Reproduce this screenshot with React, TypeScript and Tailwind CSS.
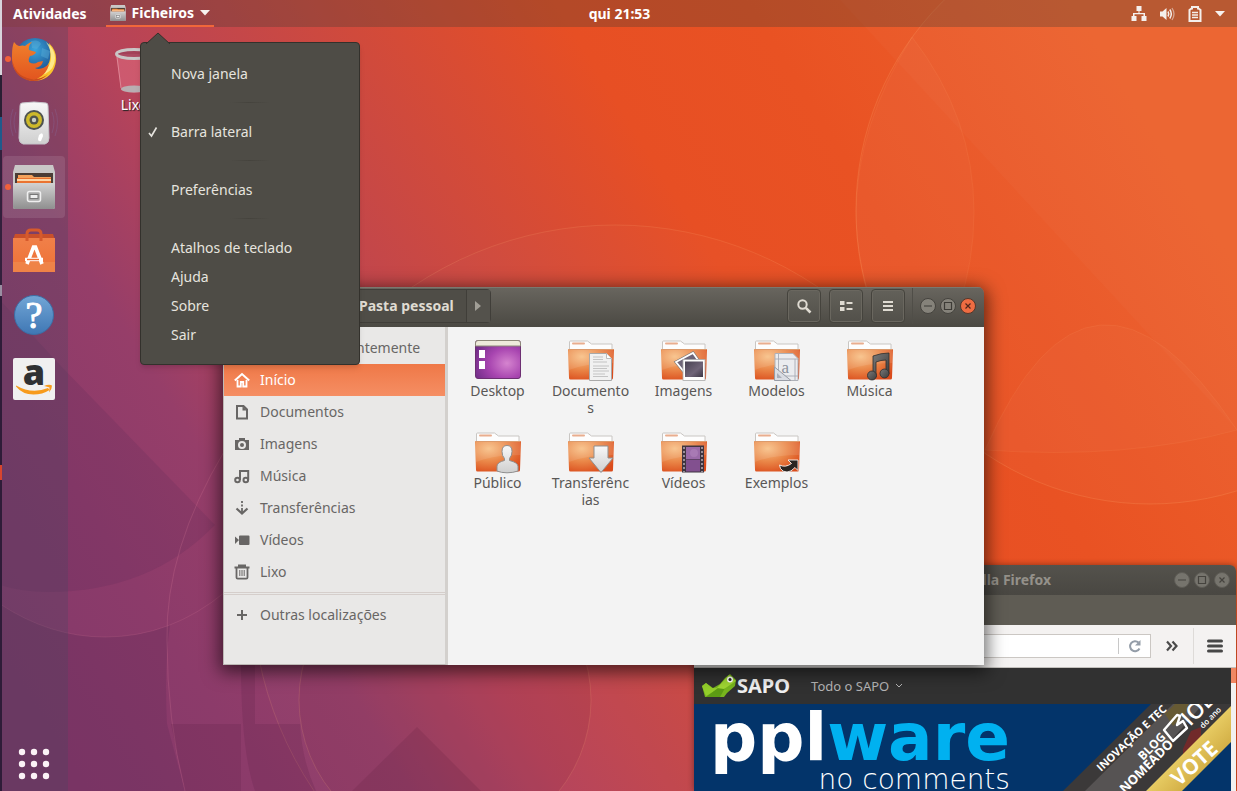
import type { ReactNode } from "react";
import { clsx } from "clsx";

const places = [
  { label: "Início", icon: <HomeIcon />, active: true },
  { label: "Documentos", icon: <PageIcon /> },
  { label: "Imagens", icon: <CameraIcon /> },
  { label: "Música", icon: <NotesIcon /> },
  { label: "Transferências", icon: <DownloadIcon /> },
  { label: "Vídeos", icon: <CamcorderIcon /> },
  { label: "Lixo", icon: <BinIcon /> },
];

const files = [
  { label: "Desktop", icon: <DesktopFolder /> },
  { label: "Documento\ns", icon: <Folder><DocumentEmblem /></Folder> },
  { label: "Imagens", icon: <Folder><PhotosEmblem /></Folder> },
  { label: "Modelos", icon: <Folder><TemplateEmblem /></Folder> },
  { label: "Música", icon: <Folder><MusicEmblem /></Folder> },
  { label: "Público", icon: <Folder><PersonEmblem /></Folder> },
  { label: "Transferênc\nias", icon: <Folder><ArrowEmblem /></Folder> },
  { label: "Vídeos", icon: <Folder><FilmEmblem /></Folder> },
  { label: "Exemplos", icon: <Folder><LinkEmblem /></Folder> },
];

const dockApps = [
  { label: "Firefox", icon: <FirefoxIcon />, running: true },
  { label: "Rhythmbox", icon: <SpeakerIcon /> },
  { label: "Ficheiros", icon: <CabinetIcon size={44} />, running: true, focused: true },
  { label: "Software", icon: <SoftwareIcon /> },
  { label: "Ajuda", icon: <HelpIcon /> },
  { label: "Amazon", icon: <AmazonIcon /> },
];

const menuGroups = [
  [{ label: "Nova janela" }],
  [{ label: "Barra lateral", checked: true }],
  [{ label: "Preferências" }],
  [{ label: "Atalhos de teclado" }, { label: "Ajuda" }, { label: "Sobre" }, { label: "Sair" }],
];

export default function App() {
  return (
    <div className="relative isolate flex min-h-screen overflow-hidden bg-[#d94a33] font-['Noto_Sans',sans-serif] text-sm">
      <SharedDefs />
      <Wallpaper />
      <div className="w-0.5 bg-[linear-gradient(#d8d4dc_0_75px,#2a1f33_75px_117px,#1f5a8c_117px_150px,#33203c_150px_285px,#9a8fa2_285px_296px,#2e1c38_296px_465px,#d8452e_465px_480px,#2e1c38_480px)]" />
      <div className="flex flex-1 flex-col">
        <TopBar />
        <div className="flex flex-1">
          <Dock />
          <main className="flex-1 px-[38px] pt-5">
            <button className="flex w-14 flex-col items-center text-white">
              <TrashCan />
              <span className="leading-5 [text-shadow:1px_1px_1px_#222]">Lixo</span>
            </button>
          </main>
        </div>
      </div>
      <FirefoxWindow />
      <FilesWindow />
      <AppMenu />
    </div>
  );
}

function TopBar() {
  return (
    <header className="grid h-[27px] grid-cols-[1fr_auto_1fr] items-center bg-[#3f3a33]/30 font-bold text-white">
      <div className="flex h-full items-stretch">
        <button className="px-[11px]">Atividades</button>
        <button className="ml-2 flex items-center gap-1.5 border-b-2 border-[#f1673a] px-1">
          <CabinetIcon size={16} />
          Ficheiros
          <Caret />
        </button>
      </div>
      <button>qui 21:53</button>
      <button className="mr-3 flex items-center gap-3 justify-self-end" aria-label="Sistema">
        <svg width="16" height="16" viewBox="0 0 16 16" fill="#f4efec">
          <path d="M5.500 0h5v5h-2v2h5.500v3h1.500v5h-5v-5h2V8.200H3.500V10h2v5h-5v-5H2V7h5.500V5h-2z" />
        </svg>
        <svg width="16" height="16" viewBox="0 0 16 16" fill="none" stroke="#f4efec">
          <path d="M1 5.500h2.500L7.500 2v12l-4-3.500H1z" fill="#f4efec" stroke="none" />
          <path d="M9 5.500q1.500 2.500 0 5M10.800 3.500q3 4.500 0 9" strokeWidth="1.500" />
          <path d="M13 2q4 6 0 12" strokeOpacity=".5" strokeWidth="1.300" />
        </svg>
        <svg width="16" height="16" viewBox="0 0 16 16" fill="none" stroke="#f4efec" strokeWidth="2">
          <path d="M4.500 2.500H5V1h6v1.500h.5L13.500 4v11h-11V4z" />
          <path d="M5 6.500h6M5 9h6M5 11.500h6" strokeWidth="1.300" />
        </svg>
        <Caret />
      </button>
    </header>
  );
}

function Dock() {
  return (
    <nav className="flex w-[66px] flex-col gap-0.5 bg-[#4a4660]/30 pt-px" aria-label="Dock">
      {dockApps.map((app) => (
        <button
          key={app.label}
          aria-label={app.label}
          className={clsx("relative mr-[3px] ml-px flex h-[62px] items-center justify-center rounded", app.focused && "bg-white/10")}
        >
          {app.running && <span className="absolute top-7 left-0.5 size-1.5 rounded-full bg-[#f0603a]" />}
          {app.icon}
        </button>
      ))}
      <button aria-label="Mostrar aplicações" className="mt-auto mr-[3px] ml-px flex h-[54px] items-center justify-center">
        <svg width="32" height="32" viewBox="0 0 32 32" fill="#fbf3f7">
          {[4, 16, 28].map((y) => [4, 16, 28].map((x) => <circle key={`${x}-${y}`} cx={x} cy={y} r="3.200" />))}
        </svg>
      </button>
    </nav>
  );
}

function AppMenu() {
  return (
    <div role="menu" className="absolute top-[42px] left-[140px] w-[220px] rounded border border-[#33312c] bg-[#4e4c46] pt-4 pb-[15px] text-[#e6e4df] shadow-md">
      <svg className="absolute -top-[11px] left-1" width="26" height="12" viewBox="0 0 26 12">
        <path d="M1 12 13 1l12 11" fill="#4e4c46" stroke="#33312c" />
      </svg>
      {menuGroups.map((group, i) => (
        <div key={i}>
          {i > 0 && (
            <div className="flex h-[29px] items-center justify-center">
              <div className="h-px w-10 bg-linear-to-r from-transparent via-[#45433d] to-transparent" />
            </div>
          )}
          {group.map((item) => (
            <MenuItem key={item.label} {...item} />
          ))}
        </div>
      ))}
    </div>
  );
}

function MenuItem({ label, checked }: { label: string; checked?: boolean }) {
  return (
    <button
      role={checked ? "menuitemcheckbox" : "menuitem"}
      aria-checked={checked}
      className="flex h-[29px] w-full items-center pl-1.5 text-left"
    >
      <span className="w-6">
        {checked && (
          <svg width="12" height="12" viewBox="0 0 12 12" fill="none" stroke="currentColor">
            <path d="m2 7 2.500 3L9.500 1.500" strokeWidth="1.600" />
          </svg>
        )}
      </span>
      {label}
    </button>
  );
}

function FilesWindow() {
  return (
    <section
      aria-label="Pasta pessoal"
      className="absolute top-[287px] left-[223px] flex h-[378px] w-[761px] flex-col overflow-hidden rounded-t-md shadow-[0_4px_18px_3px_rgba(0,0,0,0.6)]"
    >
      <div className="flex h-10 items-center bg-linear-to-b from-[#69665f] to-[#4b4943] px-2 pb-0.5 text-[#dfdbd2] shadow-[inset_0_1px_0_#7b786f]">
        <div className="flex h-[34px] rounded border border-[#45433d] bg-[#5b5952] font-bold">
          <button className="w-8" aria-label="Recuar">‹</button>
          <button className="w-8 border-l border-[#45433d]" aria-label="Avançar">›</button>
        </div>
        <div className="ml-[11px] flex h-[34px] rounded border border-[#403e39] bg-[#4f4d47]">
          <button className="flex items-center gap-1.5 pr-3 pl-7 font-bold">
            <HomeIcon />
            Pasta pessoal
          </button>
          <button className="flex w-6 items-center justify-center border-l border-[#403e39] bg-[#54524c]" aria-label="Seguinte">
            <svg width="6" height="10" viewBox="0 0 6 10" fill="#a19e96">
              <path d="M0 0l6 5-6 5z" />
            </svg>
          </button>
        </div>
        <div className="ml-auto flex gap-2">
          <HeaderButton label="Pesquisar">
            <circle cx="6.500" cy="6.500" r="4.200" strokeWidth="2" />
            <path d="m9.800 9.800 4.700 4.700" strokeWidth="2.600" />
          </HeaderButton>
          <HeaderButton label="Vista de lista">
            <path d="M2 3h4.500v4H2zM2 9h4.500v4H2zM8.500 4h6v2h-6zM8.500 10h6v2h-6z" fill="currentColor" stroke="none" />
          </HeaderButton>
          <HeaderButton label="Menu">
            <path d="M3 4h10M3 8h10M3 12h10" strokeWidth="2" />
          </HeaderButton>
        </div>
        <div className="ml-[7px] h-9 w-px bg-[#504e48]" />
        <WindowControls active />
      </div>
      <div className="flex flex-1">
        <aside className="w-[225px] border-r-3 border-b border-l border-r-[#d3d0cd] border-b-[#bdb9b6] border-l-[#bdb9b6] bg-[#e9e8e7] pt-[5px] text-[#686665]">
          <Place label="Utilizados recentemente" icon={<PageIcon />} />
          {places.map((place) => (
            <Place key={place.label} {...place} />
          ))}
          <div className="my-1 h-[3px] border-y border-[#d5cecb]" />
          <Place
            label="Outras localizações"
            icon={
              <SymbolicIcon>
                <path d="M8 3v10M3 8h10" strokeWidth="2" />
              </SymbolicIcon>
            }
          />
        </aside>
        <div className="flex flex-1 flex-wrap content-start bg-[#f3f3f3] px-[3px] pt-3">
          {files.map((file) => (
            <button key={file.label} className="flex h-[92px] w-[93px] flex-col items-center text-[#595756]">
              {file.icon}
              <span className="leading-[17px] whitespace-pre-line">{file.label}</span>
            </button>
          ))}
        </div>
      </div>
    </section>
  );
}

function Place({ label, icon, active }: { label: string; icon: ReactNode; active?: boolean }) {
  return (
    <button
      className={clsx(
        "flex h-8 w-full items-center gap-2.5 pl-2.5 text-left",
        active && "bg-linear-to-b from-[#ef7847] to-[#f58e63] text-white"
      )}
    >
      {icon}
      {label}
    </button>
  );
}

function HeaderButton({ label, children }: { label: string; children: ReactNode }) {
  return (
    <button
      aria-label={label}
      className="flex size-[34px] items-center justify-center rounded border border-[#45433d] bg-linear-to-b from-[#63615a] to-[#52504a] shadow-[inset_0_0_0_1px_#6a675f]"
    >
      <SymbolicIcon>{children}</SymbolicIcon>
    </button>
  );
}

function WindowControls({ active }: { active?: boolean }) {
  const round = "size-4 rounded-full border";
  const muted = active ? "border-[#45433e] bg-[#85827a] text-[#3d3b36]" : "border-[#5e5c56] bg-[#76746d] text-[#45433e]";
  return (
    <div className="ml-[7px] flex gap-1">
      <button aria-label="Minimizar" className={clsx(round, muted)}>
        <ControlGlyph d="M3 7h8" />
      </button>
      <button aria-label="Maximizar" className={clsx(round, muted)}>
        <ControlGlyph d="M3.500 3.500h7v7h-7z" />
      </button>
      <button aria-label="Fechar" className={clsx(round, active ? "border-[#55372b] bg-[#ef6c42] text-[#54261a]" : muted)}>
        <ControlGlyph d="m4.500 4.500 5 5m0-5-5 5" />
      </button>
    </div>
  );
}

function ControlGlyph({ d }: { d: string }) {
  return (
    <svg width="14" height="14" viewBox="0 0 14 14" fill="none" stroke="currentColor" strokeWidth="1.200">
      <path d={d} />
    </svg>
  );
}

function FirefoxWindow() {
  return (
    <section
      aria-label="Mozilla Firefox"
      className="absolute top-[565px] right-px bottom-0 flex w-[542px] flex-col overflow-hidden rounded-t-md shadow-[0_0_6px_rgba(0,0,0,0.4)]"
    >
      <div className="grid h-[30px] shrink-0 grid-cols-[1fr_auto_1fr] items-center bg-linear-to-b from-[#54524c] to-[#494742] px-1.5">
        <h2 className="col-start-2 font-bold text-[#94918a]">Pplware – Mozilla Firefox</h2>
        <div className="justify-self-end">
          <WindowControls />
        </div>
      </div>
      <div className="h-[30px] shrink-0 bg-[#5f5c54]" />
      <div className="flex h-[43px] shrink-0 items-center border-b border-[#c3c0bc] bg-[#f4f2f1] pl-4 text-[#4b4b4b]">
        <div className="flex h-6 flex-1 items-center border border-[#cbc7c3] bg-white">
          <input aria-label="Endereço" className="h-full min-w-0 flex-1 px-2 outline-none" />
          <button aria-label="Recarregar" className="flex h-4 w-8 items-center justify-center border-l border-[#c8c8c8]">
            <svg width="14" height="14" viewBox="0 0 14 14" fill="none" stroke="#949da8" strokeWidth="2">
              <path d="M11.500 9.500A5 5 0 1 1 10.500 3.500" />
              <path d="M12.500 1v5.500H7z" fill="#949da8" stroke="none" />
            </svg>
          </button>
        </div>
        <button aria-label="Mais ferramentas" className="flex w-[42px] justify-center">
          <svg width="14" height="12" viewBox="0 0 14 12" fill="none" stroke="#4b4b4b" strokeWidth="2.200">
            <path d="m2 1.500 4 4.500-4 4.500M7.500 1.500l4 4.500-4 4.500" />
          </svg>
        </button>
        <button aria-label="Abrir menu" className="flex h-9 w-[43px] items-center justify-center border-l border-[#dedbd8]">
          <svg width="16" height="14" viewBox="0 0 16 14" stroke="#474747" strokeWidth="3" strokeLinecap="round">
            <path d="M1.500 2h13M1.500 7h13M1.500 12h13" />
          </svg>
        </button>
      </div>
      <div className="flex flex-1">
        <div className="flex flex-1 flex-col">
          <div className="flex h-9 items-center bg-[#313131] pl-2">
            <SapoFrog />
            <span className="text-xl font-bold text-[#f1f1f1]">SAPO</span>
            <a href="#sapo" className="ml-[21px] flex items-center gap-1.5 text-[13px] text-[#b5b5b5]">
              Todo o SAPO
              <svg width="8" height="6" viewBox="0 0 8 6" fill="none" stroke="#b5b5b5">
                <path d="m1 1 3 3 3-3" />
              </svg>
            </a>
          </div>
          <div className="flex flex-1 justify-between overflow-hidden bg-[#03346a] pl-4">
            <div className="flex flex-col items-end text-white">
              <p className="font-['DejaVu_Sans',sans-serif] text-[66px] leading-[68px] font-bold">
                ppl<span className="text-[#00b1f0]">ware</span>
              </p>
              <p className="font-['DejaVu_Sans',sans-serif] text-[28px] leading-4 font-extralight">no comments</p>
            </div>
            <VoteRibbon />
          </div>
        </div>
        <div className="w-[5px] bg-[#f2f1f0]">
          <div className="h-[15px] bg-[#f08763]" />
        </div>
      </div>
    </section>
  );
}

function VoteRibbon() {
  return (
    <svg className="shrink-0" width="168" height="87" viewBox="0 0 168 87" fontFamily="'Open Sans', sans-serif" fontWeight="700" fill="#fff">
      <path d="M0 87 88 0h80v4L83 87z" fill="#3b3939" />
      <path d="M22 87 110 0h30L64 87z" fill="#565353" />
      <path d="m102 10 10-10h14l-4 10-12 12z" fill="#675a33" />
      <path d="m120 45 8-18 10-4v12l-18 22z" fill="#712a2a" />
      <path d="m83 87 85-85v36l-49 49z" fill="url(#gold)" />
      <text transform="translate(38 68) rotate(-43)" fontSize="11">INOVAÇÃO E TEC</text>
      <text transform="translate(80 57) rotate(-45)" fontSize="12">BLOG</text>
      <text transform="translate(62 90) rotate(-45)" fontSize="13">NOMEADO</text>
      <text transform="translate(116 83) rotate(-42)" fontSize="21">VOTE</text>
      <path d="m101 26 9 11 14-13-4-7-6 4 3-9-3-1z" fill="none" stroke="#fff" strokeWidth="2.400" strokeLinejoin="round" />
      <text transform="translate(127 23) rotate(-45)" fontSize="22" fontWeight="600">IOL</text>
      <text transform="translate(140 25) rotate(-45)" fontSize="8" fontWeight="600">do ano</text>
    </svg>
  );
}

function SapoFrog() {
  return (
    <svg width="35" height="26" viewBox="0 0 35 26">
      <path d="m0 13 4-3 7 5 7-4 5-6 5-4 6 6-1 6-8 7-3 4H3z" fill="#78b51e" />
      <path d="m0 13 4-3 6 5h8L4 23z" fill="#94cf2b" />
      <path d="m4 24 12-9h7l-5 9z" fill="#5d9c14" />
      <path d="M15 15 27 2l7 6-12 8z" fill="#a0d733" />
      <circle cx="28" cy="6.500" r="3" fill="#fff" />
      <circle cx="28" cy="6.500" r="1.500" fill="#222" />
    </svg>
  );
}

function Caret() {
  return (
    <svg width="10" height="6" viewBox="0 0 10 6" fill="#f7f2ef">
      <path d="M0 0h10L5 5.500z" />
    </svg>
  );
}

function SymbolicIcon({ children }: { children: ReactNode }) {
  return (
    <svg width="16" height="16" viewBox="0 0 16 16" fill="none" stroke="currentColor" className="shrink-0">
      {children}
    </svg>
  );
}

function HomeIcon() {
  return (
    <SymbolicIcon>
      <path d="M.8 8.500 8 2l7.200 6.500" strokeWidth="2" />
      <path d="M3.500 8v6.500h3.300V10h2.400v4.500h3.300V8" strokeWidth="1.800" />
    </SymbolicIcon>
  );
}

function PageIcon() {
  return (
    <SymbolicIcon>
      <path d="M3 2h6.500L13 5.500V14.500H3z" strokeWidth="2" />
      <path d="M8.500 2v4.500H13z" fill="currentColor" stroke="none" />
    </SymbolicIcon>
  );
}

function CameraIcon() {
  return (
    <SymbolicIcon>
      <path fillRule="evenodd" d="M1 4h4V2h6v2h4v10H1zM8 5a4 4 0 1 0 0 8 4 4 0 0 0 0-8z" fill="currentColor" stroke="none" />
      <circle cx="8" cy="9" r="2" fill="currentColor" stroke="none" />
    </SymbolicIcon>
  );
}

function NotesIcon() {
  return (
    <SymbolicIcon>
      <circle cx="3.500" cy="12" r="2.300" strokeWidth="2" />
      <circle cx="11.800" cy="12" r="2.300" strokeWidth="2" />
      <path d="M6 12V3h8.200v9" strokeWidth="2" />
    </SymbolicIcon>
  );
}

function DownloadIcon() {
  return (
    <SymbolicIcon>
      <path d="M8 1v2M8 4.500v2M8 8v5" strokeWidth="1.800" />
      <path d="m2.500 8.500 5.500 5 5.500-5" strokeWidth="2.200" />
    </SymbolicIcon>
  );
}

function CamcorderIcon() {
  return (
    <SymbolicIcon>
      <path d="M1 4.500 5 8l-4 4zM5 4.500q0-1 1-1h8.500q1 0 1 1V12q0 1-1 1H6q-1 0-1-1z" fill="currentColor" stroke="none" />
    </SymbolicIcon>
  );
}

function BinIcon() {
  return (
    <SymbolicIcon>
      <path d="M.5 3.500h15M4 1.500h8" strokeWidth="1.800" />
      <path d="M2.500 4v9.500q0 1.200 1.200 1.200h8.600q1.200 0 1.200-1.200V4" strokeWidth="1.800" />
      <path d="M5.800 6v6M8 6v6M10.200 6v6" />
    </SymbolicIcon>
  );
}

function Folder({ children }: { children: ReactNode }) {
  return (
    <svg width="48" height="43" viewBox="0 0 48 43" className="shrink-0">
      <path d="M2.500 11V3q0-1 1-1h17l4 3h20.500v7z" fill="#fdfdfd" stroke="#c9c6c3" />
      <rect x="5" y="3.500" width="13" height="2" rx="1" fill="#e9ad8e" />
      <path d="M1 11q0-1 1-1h44q1 0 1 1l-1 28q0 1.500-1.500 1.500h-41Q2 40.500 2 39z" fill="url(#folder-front)" />
      <path d="M1.500 11.500q0-1 1-1h43q1 0 1 1V24Q20 24 2 31z" fill="#fff" fillOpacity=".1" />
      <path d="M1.500 10.500h45" stroke="#dc9a6b" />
      {children}
    </svg>
  );
}

function DesktopFolder() {
  return (
    <svg width="48" height="43" viewBox="0 0 48 43" className="shrink-0">
      <rect x="1.500" y="1.500" width="45" height="38" rx="2.500" fill="url(#desktop-front)" stroke="#6d2f72" />
      <path d="M1.500 7V4q0-2.500 2.500-2.500h40q2.500 0 2.500 2.500v3z" fill="#eeeadb" stroke="#8d8878" />
      <path d="M5 11h6v8H5zM5 22h6v8H5z" fill="#fff" />
    </svg>
  );
}

function DocumentEmblem() {
  return (
    <>
      <path d="M22.500 14.500h17l5 5v22h-22z" fill="#f1f1f1" stroke="#a9a9a9" />
      <path d="M39.500 14.500v5h5" fill="#fff" stroke="#bbb" />
      <path d="M26 18h10M26 20.500h10M26 23h14M26 27h16M26 29.500h14M26 32h16M26 35h12M26 37.500h15" stroke="#b9b9b9" strokeWidth=".8" />
    </>
  );
}

function PhotosEmblem() {
  return (
    <>
      <path d="m16 23 17-9 10 14-14 11z" fill="#6d6578" stroke="#777" strokeWidth="3" />
      <path d="m16 23 17-9 10 14-14 11z" fill="#6d6578" stroke="#fff" strokeWidth="1.800" />
      <rect x="23" y="20.500" width="22" height="21" fill="#fdfdfd" stroke="#aaa" strokeWidth=".8" />
      <rect x="25" y="22.500" width="18" height="15.500" fill="url(#photo)" />
    </>
  );
}

function TemplateEmblem() {
  return (
    <>
      <path d="M22 14.500h18l5 5v22H22z" fill="#ebecef" stroke="#aeb1b8" />
      <path d="M22 20h23M25.500 15v25M42 20v21M22 37h23" stroke="#a7abb4" strokeWidth=".9" />
      <text x="28.500" y="34" fontSize="17" fontFamily="'Liberation Serif', serif" fill="#8d929c">a</text>
      <path d="M21.500 28v13.500H38z" fill="#d9dce2" fillOpacity=".9" stroke="#989ca6" />
      <path d="M24 34v5h5z" fill="#a9adb8" />
    </>
  );
}

function MusicEmblem() {
  return (
    <g fill="url(#dark-metal)" stroke="#2d2d2d" strokeWidth=".8">
      <path d="M27 17q8-3 16-3v21h-3V21q-5 0-10 2v15h-3z" />
      <circle cx="26" cy="36.500" r="4.500" />
      <circle cx="38.500" cy="34.500" r="4.500" />
    </g>
  );
}

function PersonEmblem() {
  return (
    <path
      d="M33 14.500q5 0 5 6 0 4-2.500 7v2q8 2 8.500 5.500V40q-5 1.800-11 1.800T23 40v-5q.5-4 7.500-5.500v-2Q28 25 28 20.500q0-6 5-6z"
      fill="url(#silver)"
      stroke="#8f8f8f"
    />
  );
}

function ArrowEmblem() {
  return <path d="M27 15h14v12h5L34 41.500 22 27h5z" fill="url(#silver)" stroke="#8f8f8f" />;
}

function FilmEmblem() {
  return (
    <>
      <rect x="22" y="14.500" width="22" height="27" fill="#3f3540" />
      <rect x="26" y="16" width="14" height="12" fill="#9a6aa8" />
      <rect x="26" y="28.500" width="14" height="12" fill="#82508f" />
      <circle cx="34" cy="22" r="4" fill="#b589c0" fillOpacity=".5" />
      <path d="M24 16v25M42 16v25" stroke="#b0a8b0" strokeWidth="1.600" strokeDasharray="2 2" />
    </>
  );
}

function LinkEmblem() {
  return (
    <path
      d="M35 29h10v10.500l-3-3q-4 4.500-8 4.500-4.500 0-6.500-3.500L26.500 34q6 3 12-1.500z"
      fill="#2b2421"
      stroke="#fff"
      strokeOpacity=".85"
    />
  );
}

function FirefoxIcon() {
  return (
    <svg width="46" height="46" viewBox="0 0 46 46">
      <circle cx="24" cy="22" r="20" fill="url(#globe)" />
      <path d="M20 5q8-2 10 3l-4 5-5-1zM31 12l8 3-2 8-7-3z" fill="#5fb4dc" fillOpacity=".4" />
      <path d="M38 7q8 8 7 18-2 15-15 19-13 3-21-5l14-2q14-3 16-14 1-8-1-16z" fill="#fbc52d" />
      <path d="M35 6q5 7 5 16-1 13-14 17l8-1q10-5 10-16 0-9-9-16z" fill="#fff0a0" fillOpacity=".8" />
      <path d="M3 6q2 3 5 4 4-1 6 0 5-4 7-4-4 4-3 8l7 2q-1 3-6 4-2 3-1 6 5 3 9 0l5-1q-1 6-8 7 6 3 14-4-2 10-12 15-12 3-20-6Q0 30 1 19 1 11 3 6z" fill="url(#fox)" />
      <path d="M1 22q2 18 19 21 10 1 17-5-7 8-17 7Q2 42 1 22z" fill="#c94a1f" />
    </svg>
  );
}

function SpeakerIcon() {
  return (
    <svg width="48" height="46" viewBox="0 0 48 46" fill="none">
      <path d="M6 12q-4 10 0 21M3 9q-5 13 0 27M42 12q4 10 0 21M45 9q5 13 0 27" stroke="#8790d0" strokeOpacity=".18" />
      <path d="M12 3q12-2 24 0 2 0 2 3l1 32q0 5-4 6H13q-4-1-4-6L10 6q0-3 2-3z" fill="url(#silver)" stroke="#c5c3c9" />
      <circle cx="24" cy="20" r="10" fill="#4e5350" />
      <circle cx="24" cy="20" r="8" fill="#cdb92a" />
      <circle cx="24" cy="20" r="4.500" fill="#50544c" />
      <circle cx="24" cy="20" r="2.200" fill="#c9cfc6" />
      <path d="M29 35q4-4 4 1l-2 5q-3 1-3-2z" fill="#fff" />
    </svg>
  );
}

function CabinetIcon({ size }: { size: number }) {
  return (
    <svg width={size} height={size} viewBox="0 0 44 44">
      <path d="M3 0h38l2 7v35q0 2-2 2H3q-2 0-2-2V7z" fill="#c9c8c7" />
      <path d="M3 8h38v10H3z" fill="#4b3d36" />
      <path d="M6 10h14l2 2h17v6H6z" fill="#f4a25b" />
      <path d="M5 13h34v5H5z" fill="#ea7330" />
      <path d="M5 15h34" stroke="#fcd6a8" strokeWidth="2" />
      <path d="M1 18h42v24q0 2-2 2H3q-2 0-2-2z" fill="url(#steel)" />
      <rect x="15.500" y="26.500" width="13" height="10" rx="2" fill="#a9a9a9" stroke="#efefef" strokeWidth="1.500" />
      <rect x="18" y="29.500" width="8" height="4" fill="#eee" stroke="#777" />
    </svg>
  );
}

function SoftwareIcon() {
  return (
    <svg width="44" height="46" viewBox="0 0 44 46">
      <path d="M3 6h38l2 6H1z" fill="#c9502a" />
      <path d="M1 10h42v34H1z" fill="url(#bag)" />
      <path d="M1 34h42v10H1z" fill="#f08a4e" fillOpacity=".7" />
      <path d="M15 13V6q0-4 4-4h6q4 0 4 4v7" fill="none" stroke="#d65a2c" strokeWidth="3" />
      <path d="m15 36 6.500-17h2L30 36M13 31.500h18" fill="none" stroke="#fff" strokeWidth="3.600" />
      <path d="M15 31.500h12" stroke="#ef7138" strokeWidth="1.400" />
    </svg>
  );
}

function HelpIcon() {
  return (
    <svg width="42" height="42" viewBox="0 0 42 42">
      <circle cx="21" cy="21" r="19.500" fill="url(#help)" stroke="#3b6ea5" />
      <text x="21" y="34" textAnchor="middle" fontSize="38" fontFamily="'Liberation Serif', serif" fill="#fff" stroke="#fff">?</text>
    </svg>
  );
}

function AmazonIcon() {
  return (
    <svg width="42" height="42" viewBox="0 0 42 42">
      <rect width="42" height="42" rx="2" fill="#f0f0f0" />
      <text x="21" y="27" textAnchor="middle" fontSize="36" fontFamily="'Open Sans', sans-serif" fontWeight="800" fill="#2f3133">a</text>
      <path d="M3 27.500q16 9 32 2.500l1.500 2q-7 4.500-16 4.500-11 0-17.500-8z" fill="#f79b1c" />
      <path d="M31 28q5-2 8-.5 0 4-3 7 .5-3 .5-5-2-1-5.500-1.500z" fill="#f79b1c" />
    </svg>
  );
}

function TrashCan() {
  return (
    <svg width="40" height="48" viewBox="0 0 40 48">
      <path d="M2 7h36l-5 36q-13 6-26 0z" fill="#e8758a" fillOpacity=".45" />
      <ellipse cx="20" cy="42" rx="13" ry="3.500" fill="#b9aeb2" />
      <ellipse cx="20" cy="7" rx="17.500" ry="4.500" fill="#95405a" fillOpacity=".6" stroke="#c9c6c6" strokeWidth="3" />
      <path d="m3 10 4 31" stroke="#e9a5b0" strokeOpacity=".6" />
    </svg>
  );
}

function Wallpaper() {
  return (
    <svg className="absolute inset-0 -z-10 size-full" viewBox="0 0 1237 791" preserveAspectRatio="none" aria-hidden="true">
      <rect width="1237" height="791" fill="url(#sunset)" />
      <g fill="#fff" stroke="#ffb27a" strokeOpacity=".2">
        <circle cx="1150" cy="210" r="294" fillOpacity=".025" />
        <circle cx="615" cy="588" r="363" fillOpacity=".015" strokeOpacity=".16" />
        <path d="M985 450q105-240 252-20-110 30-252 20z" fillOpacity=".025" strokeOpacity=".1" />
        <path d="M912 37q62 80 62 175 0 100-62 175-112-170 0-350z" fillOpacity=".02" strokeOpacity=".1" />
      </g>
      {/* lower left: a dark disc, the ground under the arc, and the broad ring */}
      <path d="M0 300 60 365 215 525Q150 592 48 592 22 592 0 585z" fill="#4a2050" fillOpacity=".14" />
      <path d="M0 604q50 33 105 33 36 0 65-12-6 40-3 99l18 67H0z" fill="#4a2050" fillOpacity=".18" />
      <path d="M0 604q50 33 105 33 66 0 120-45" fill="none" stroke="#ff9ab0" strokeOpacity=".12" />
      <path d="M225 450q-60 100-58 190 0 80 18 151" fill="none" stroke="#ff9ab0" strokeOpacity=".16" />
      <path d="M171 724h70v67h-56z" fill="#5a2048" fillOpacity=".2" />
      <path d="M241 665h14v59h45q2 36 16 67h-61q-14-40-14-126z" fill="#5a2048" fillOpacity=".2" />
      <circle cx="445" cy="700" r="146" fill="#6a2030" fillOpacity=".1" stroke="#ffb27a" strokeOpacity=".16" />
      <path d="m417 727 64 64H352z" fill="#5a1a35" fillOpacity=".16" />
      <path d="m840 0 397 430V0z" fill="#fff" fillOpacity=".02" />
    </svg>
  );
}

function SharedDefs() {
  return (
    <svg width="0" height="0" className="absolute" aria-hidden="true">
      <defs>
        <linearGradient id="sunset" gradientUnits="userSpaceOnUse" x1="63" y1="752" x2="1126" y2="89">
          <stop offset="0" stopColor="#84396a" />
          <stop offset=".12" stopColor="#8c3b6a" />
          <stop offset=".22" stopColor="#963e69" />
          <stop offset=".32" stopColor="#b5435a" />
          <stop offset=".5" stopColor="#d04a3c" />
          <stop offset=".65" stopColor="#e74f24" />
          <stop offset=".78" stopColor="#e95223" />
          <stop offset="1" stopColor="#ec602b" />
        </linearGradient>
        <radialGradient id="folder-front" cx=".3" cy=".25" r=".85">
          <stop offset="0" stopColor="#f7bf84" />
          <stop offset=".5" stopColor="#ea8748" />
          <stop offset="1" stopColor="#da4b1b" />
        </radialGradient>
        <radialGradient id="desktop-front" cx=".7" cy=".6" r=".8">
          <stop offset="0" stopColor="#d584cf" />
          <stop offset=".5" stopColor="#a845b0" />
          <stop offset="1" stopColor="#6f2c86" />
        </radialGradient>
        <linearGradient id="photo" x2="1" y2="1">
          <stop stopColor="#494353" />
          <stop offset=".6" stopColor="#6f6478" />
          <stop offset="1" stopColor="#3d3746" />
        </linearGradient>
        <linearGradient id="dark-metal" x2="1" y2="1">
          <stop stopColor="#7a7a7a" />
          <stop offset="1" stopColor="#3c3c3c" />
        </linearGradient>
        <linearGradient id="silver" x2="0" y2="1">
          <stop stopColor="#f8f8f8" />
          <stop offset="1" stopColor="#cfcfcf" />
        </linearGradient>
        <linearGradient id="steel" x2="0" y2="1">
          <stop stopColor="#d2d2d2" />
          <stop offset="1" stopColor="#8f8f8f" />
        </linearGradient>
        <linearGradient id="bag" x2="0" y2="1">
          <stop stopColor="#f08049" />
          <stop offset="1" stopColor="#ee7136" />
        </linearGradient>
        <linearGradient id="help" x2="0" y2="1">
          <stop stopColor="#72a6d6" />
          <stop offset="1" stopColor="#3f77b4" />
        </linearGradient>
        <radialGradient id="globe" cx=".5" cy=".3" r=".7">
          <stop stopColor="#3aa5dc" />
          <stop offset="1" stopColor="#173f80" />
        </radialGradient>
        <linearGradient id="fox" x2="0" y2="1">
          <stop stopColor="#f0802c" />
          <stop offset="1" stopColor="#e2551f" />
        </linearGradient>
        <linearGradient id="gold" x2="1" y2="1">
          <stop stopColor="#c4962a" />
          <stop offset=".5" stopColor="#e7cb62" />
          <stop offset="1" stopColor="#b88a22" />
        </linearGradient>
      </defs>
    </svg>
  );
}
